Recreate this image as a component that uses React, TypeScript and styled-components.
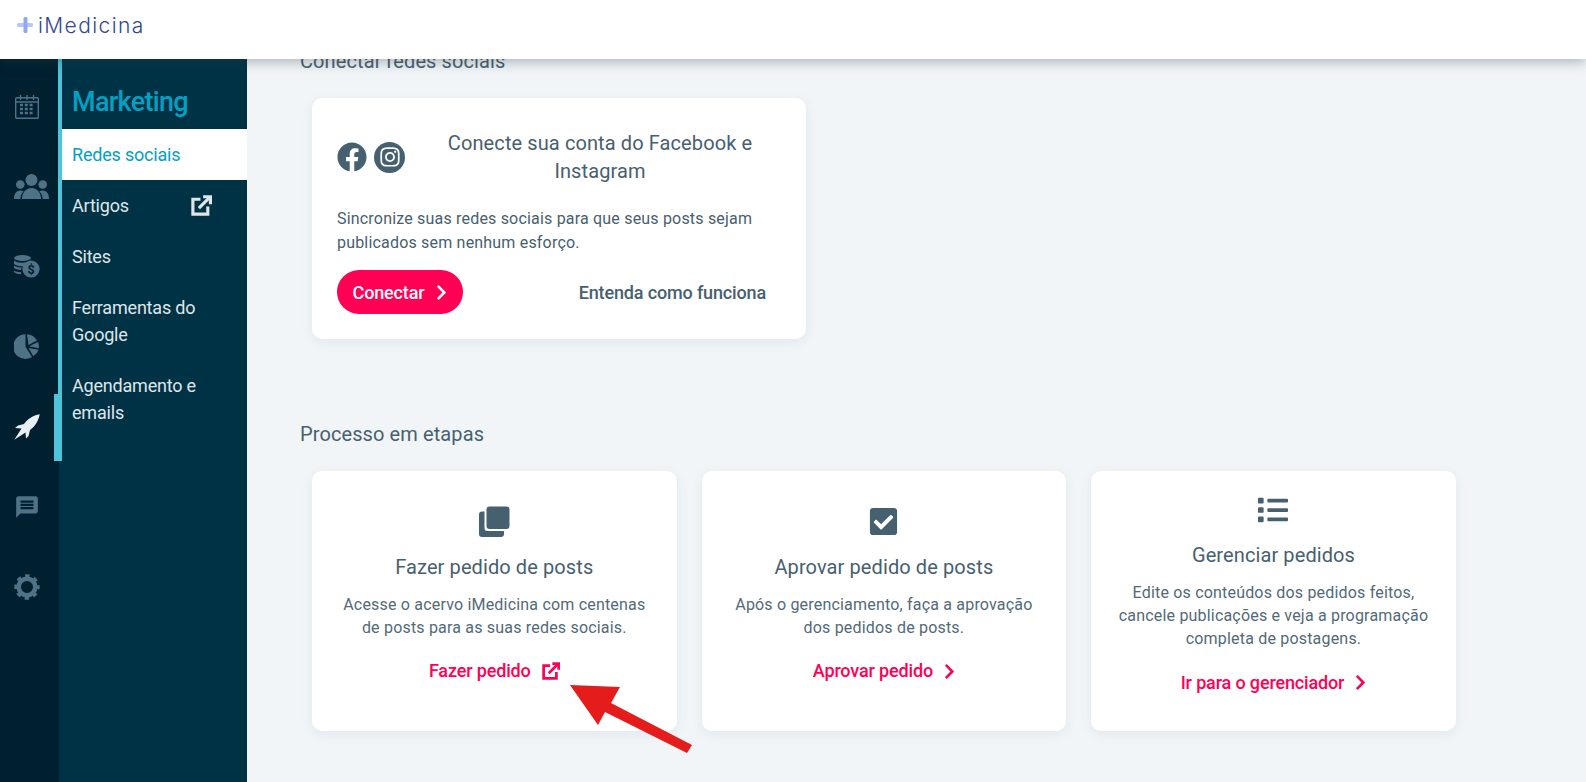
import React from "react";
import styled, { createGlobalStyle } from "styled-components";
import { FaChevronRight, FaFacebook, FaInstagram, FaCheckSquare, FaList } from "react-icons/fa";
import { MdMessage } from "react-icons/md";

const Global = createGlobalStyle`
  html, body { margin: 0; padding: 0; height: 100%; overflow: hidden; background: #f1f5f8; }
  * { box-sizing: border-box; }
  body { font-family: Roboto, "Liberation Sans", sans-serif; }
`;

const Page = styled.div`
  width: 1586px; height: 782px; display: flex; flex-direction: column; position: relative; overflow: hidden;
`;
const Header = styled.header`
  height: 59px; flex: none; background: #fff; display: flex; align-items: center; padding: 0 0 9px 17px;
  box-shadow: 0 3px 12px rgba(40, 60, 70, 0.35); position: relative; z-index: 2;
`;
const LogoText = styled.span`
  font-family: Inter, sans-serif; font-weight: 300; font-size: 21px; color: #34478f; margin-left: 3px; letter-spacing: 1.4px;
`;
const Body = styled.div`
  flex: 1; display: flex; min-height: 0;
`;
const Rail = styled.nav`
  width: 59px; flex: none; background: #00202f; position: relative; padding-top: 7.5px; display: flex; flex-direction: column;
  &::after { content: ""; position: absolute; left: 58px; top: 0; width: 4px; height: 335px; background: #4dc4da; z-index: 1; }
`;
const RailItem = styled.div<{ $active?: boolean; $shift?: number }>`
  height: 80px; display: flex; align-items: center; justify-content: center; width: 53px; flex: none;
  padding-left: ${(p) => p.$shift ?? 0}px;
  color: ${(p) => (p.$active ? "#e8f0f4" : "#4f7286")};
  position: relative;
  ${(p) =>
    p.$active
      ? `&::after { content: ""; position: absolute; left: 54px; top: 7.5px; width: 8px; height: 67px; background: #4dc4da; z-index: 1; }`
      : ""}
`;
const Panel = styled.aside`
  width: 188px; flex: none; background: #003246; padding-top: 22px; color: #dfe6ea;
`;
const PanelTitle = styled.h2`
  margin: 0; padding-left: 13px; height: 48px; font-size: 27px; font-weight: 500; color: #03a0c2; letter-spacing: -0.7px; line-height: 42px;
`;
const MenuItem = styled.div<{ $active?: boolean }>`
  display: flex; justify-content: space-between; align-items: center; padding: 12px 35px 12px 13px;
  font-size: 18px; line-height: 27px; letter-spacing: -0.2px;
  background: ${(p) => (p.$active ? "#fff" : "transparent")};
  color: ${(p) => (p.$active ? "#03a0c2" : "#dfe6ea")};
  width: 188px;
`;
const Main = styled.main`
  flex: 1; padding: 0 0 0 53px; color: #47606f; overflow: hidden; min-width: 0;
`;
const SectionTitle = styled.h3<{ $top?: number }>`
  margin: ${(p) => p.$top ?? 0}px 0 0 0; font-weight: 400; font-size: 20px; line-height: 24px; color: #47606f; letter-spacing: 0.1px;
`;
const ConnectCard = styled.section`
  width: 494px; height: 241px; margin: 25px 0 0 12px; background: #fff; border-radius: 10px;
  box-shadow: 0 3px 12px rgba(60, 90, 110, 0.09); padding: 31px 24px 0 25px;
`;
const ConnectHead = styled.div`
  display: flex; align-items: center; gap: 7px;
`;
const ConnectTitle = styled.div`
  flex: 1; text-align: center; font-size: 20px; line-height: 28px; padding-left: 6px; letter-spacing: 0.1px;
`;
const Desc = styled.p`
  margin: 22px 0 0; font-size: 16px; line-height: 24px; letter-spacing: 0.19px;
`;
const Actions = styled.div`
  display: flex; justify-content: space-between; align-items: center; margin-top: 15px; padding-right: 16px;
`;
const ConnectButton = styled.button`
  height: 44px; width: 126px; border: 0; border-radius: 22px; background: #ff0055; color: #fff;
  font: 500 18px Roboto, sans-serif; letter-spacing: -0.15px; display: flex; align-items: center; justify-content: center; gap: 12px; padding: 0;
`;
const PlainLink = styled.span`
  font-size: 18px; font-weight: 500; color: #47606f; letter-spacing: -0.15px;
`;
const IconCircle = styled.span`
  display: inline-flex; color: #47606f;
`;
const IgCircle = styled.span`
  width: 31px; height: 31px; border-radius: 50%; background: #47606f; color: #fff; display: inline-flex; align-items: center; justify-content: center;
`;
const Cards = styled.div`
  display: flex; gap: 25px; margin: 25px 0 0 12px;
`;
const Card = styled.article`
  width: 364.6px; height: 260px; background: #fff; border-radius: 10px; box-shadow: 0 3px 12px rgba(60, 90, 110, 0.09);
  display: flex; flex-direction: column; align-items: center; justify-content: center; text-align: center; padding-bottom: 13px;
`;
const CardIcon = styled.div`
  height: 32px; display: flex; align-items: center; justify-content: center; color: #47606f;
`;
const CardTitle = styled.h4`
  margin: 15px 0 0; font-weight: 400; font-size: 20px; line-height: 28px; color: #47606f; letter-spacing: 0.1px;
`;
const CardText = styled.p`
  margin: 12px 0 0; font-size: 16px; line-height: 23px; color: #526a78; letter-spacing: 0.19px;
`;
const CardLink = styled.div`
  margin-top: 20.5px; font-size: 18px; font-weight: 500; line-height: 24px; color: #ff0055; display: flex; align-items: center; gap: 11px; letter-spacing: -0.15px;
`;
const Chevron = styled(FaChevronRight)`
  width: 11px; height: 17px; flex: none;
`;
const ArrowMark = styled.svg`
  position: absolute; left: 0; top: 0; z-index: 3; pointer-events: none;
`;

const Calendar = () => (
  <svg width="26" height="26" viewBox="0 0 26 26" fill="none" stroke="currentColor" strokeWidth="1.4">
    <rect x="1.7" y="3.7" width="22.6" height="20.6" rx="1" />
    <path d="M1.7 8h22.6M6.5 1v5M13 1v5M19.5 1v5" />
    <path d="M6 11h14M6 15h14M6 19h14" strokeWidth="2.6" strokeDasharray="3 1.8" />
  </svg>
);
const Users = () => (
  <svg width="35" height="26" viewBox="0 0 35 26" fill="currentColor">
    <circle cx="17.5" cy="6" r="6" />
    <circle cx="6.300" cy="10.500" r="4.300" />
    <circle cx="28.700" cy="10.500" r="4.300" />
    <path d="M8 25c0-6 3.500-11 9.500-11S27 19 27 25z" />
    <path d="M0 25c0-5 2-8.500 6.500-8.500 1.200 0 2.300.3 3.100.8C7.500 19.500 6.500 22 6.300 25z" />
    <path d="M35 25c0-5-2-8.500-6.500-8.500-1.200 0-2.300.3-3.100.8 2.100 2.200 3.100 4.700 3.300 7.700z" />
  </svg>
);
const Coins = () => (
  <svg width="26" height="23" viewBox="0 0 26 23" fill="currentColor">
    <ellipse cx="8.5" cy="3" rx="8.5" ry="3" />
    <path d="M0 5.5c2 1.800 5 2.200 8.500 2.200s6.500-.4 8.500-2.200v2.200c-3 .6-5.500 1.800-7 3.500H8.500C5 11.200 2 10.600 0 8.900zM0 10.500c2 1.400 4.500 2 7.800 2.100-.4.800-.7 1.500-.8 2.400C4.200 14.800 1.600 14 0 13zM0 15.500c1.700 1 3.800 1.500 6.800 1.600l.4 2.200C4.300 19.200 1.700 18.400 0 17.300z" />
    <circle cx="17" cy="14" r="8.600" />
    <text x="17" y="18.500" textAnchor="middle" fontSize="12.500" fontWeight="700" fontFamily="Roboto" fill="#00202f">$</text>
  </svg>
);
const Pie = () => (
  <svg width="25" height="25" viewBox="0 0 25 25" fill="currentColor">
    <path d="M11.500 0.300v12.500l6.500 10.200A12.300 12.300 0 1 1 11.500 0.300z" />
    <path d="M13 0.200a12.300 12.300 0 0 1 10 6.200l-8.500 4.500z" />
    <path d="M24 8a12.300 12.300 0 0 1 .8 6.300L15.200 12.300z" />
    <path d="M24.600 15.800a12.300 12.300 0 0 1-5.300 6.500L14.500 14z" />
  </svg>
);
const Rocket = () => (
  <svg width="26" height="26" viewBox="0 0 26 26" fill="currentColor">
    <path d="M25.700 0.300C19 1.500 13.500 5 10 10L4 11.500 1 14l6.500.5L0.300 25.700l11.200-7.200.5 6 2.500-2.500 1.500-6C21 12.500 24.500 7 25.700 0.300z" />
  </svg>
);
const Cog = () => (
  <svg width="26" height="26" viewBox="0 0 26 26" fill="none" stroke="currentColor">
    <circle cx="13" cy="13" r="8.300" strokeWidth="4.600" />
    <circle cx="13" cy="13" r="11.200" strokeWidth="3" strokeDasharray="4.400 4.400" strokeDashoffset="2.200" />
  </svg>
);
const External = ({ size = 20 }: { size?: number }) => (
  <svg width={size} height={size} viewBox="0 0 20 20" fill="none" stroke="currentColor" strokeWidth="3">
    <path d="M9 4H1.800v14.200H16V11" />
    <path d="M7.500 12.500 17.500 2.500" />
    <path d="M11.500 1.700h7v7" />
  </svg>
);
const Copy = () => (
  <svg width="31" height="31" viewBox="0 0 31 31" fill="currentColor">
    <rect x="7.500" y="0.500" width="23" height="22.500" rx="3" />
    <path d="M5.500 5.500H3a3 3 0 0 0-3 3V28a3 3 0 0 0 3 3h19a3 3 0 0 0 3-3v-3H8.500a3 3 0 0 1-3-3z" />
  </svg>
);

export default function App() {
  return (
    <Page>
      <Global />
      <Header>
        <svg width="18" height="18" viewBox="0 0 18 18">
          <rect x="0" y="7" width="16" height="4" rx="1.500" fill="#b6c6f5" />
          <rect x="6.500" y="1" width="4" height="16" rx="1.500" fill="#8fa8f0" />
        </svg>
        <LogoText>iMedicina</LogoText>
      </Header>
      <Body>
        <Rail>
          <RailItem><Calendar /></RailItem>
          <RailItem $shift={9}><Users /></RailItem>
          <RailItem><Coins /></RailItem>
          <RailItem><Pie /></RailItem>
          <RailItem $active><Rocket /></RailItem>
          <RailItem><MdMessage size={26} /></RailItem>
          <RailItem><Cog /></RailItem>
        </Rail>
        <Panel>
          <PanelTitle>Marketing</PanelTitle>
          <MenuItem $active>Redes sociais</MenuItem>
          <MenuItem>Artigos <External size={21} /></MenuItem>
          <MenuItem>Sites</MenuItem>
          <MenuItem>Ferramentas do Google</MenuItem>
          <MenuItem>Agendamento e emails</MenuItem>
        </Panel>
        <Main>
          <SectionTitle $top={-10}>Conectar redes sociais</SectionTitle>
          <ConnectCard>
            <ConnectHead>
              <IconCircle><FaFacebook size={30} /></IconCircle>
              <IgCircle><FaInstagram size={22} /></IgCircle>
              <ConnectTitle>Conecte sua conta do Facebook e Instagram</ConnectTitle>
            </ConnectHead>
            <Desc>Sincronize suas redes sociais para que seus posts sejam publicados sem nenhum esforço.</Desc>
            <Actions>
              <ConnectButton>Conectar <Chevron /></ConnectButton>
              <PlainLink>Entenda como funciona</PlainLink>
            </Actions>
          </ConnectCard>
          <SectionTitle $top={83}>Processo em etapas</SectionTitle>
          <Cards>
            <Card>
              <CardIcon><Copy /></CardIcon>
              <CardTitle>Fazer pedido de posts</CardTitle>
              <CardText>Acesse o acervo iMedicina com centenas<br />de posts para as suas redes sociais.</CardText>
              <CardLink>Fazer pedido <External size={18} /></CardLink>
            </Card>
            <Card>
              <CardIcon><FaCheckSquare size={31} /></CardIcon>
              <CardTitle>Aprovar pedido de posts</CardTitle>
              <CardText>Após o gerenciamento, faça a aprovação<br />dos pedidos de posts.</CardText>
              <CardLink>Aprovar pedido <Chevron /></CardLink>
            </Card>
            <Card>
              <CardIcon><FaList size={30} /></CardIcon>
              <CardTitle>Gerenciar pedidos</CardTitle>
              <CardText>Edite os conteúdos dos pedidos feitos,<br />cancele publicações e veja a programação<br />completa de postagens.</CardText>
              <CardLink>Ir para o gerenciador <Chevron /></CardLink>
            </Card>
          </Cards>
        </Main>
      </Body>
      <ArrowMark width="1586" height="782" viewBox="0 0 1586 782">
        <polygon points="570,685 620,687 611,703 692,745 687,753 605,712 598,725" fill="#e51c1c" />
      </ArrowMark>
    </Page>
  );
}
